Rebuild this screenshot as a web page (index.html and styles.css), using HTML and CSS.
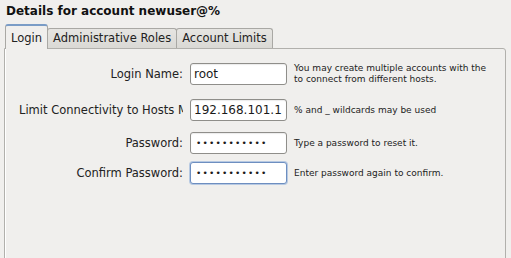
FILE: index.html
```html
<!DOCTYPE html>
<html lang="en">
<head>
<meta charset="UTF-8">
<title>Details for account</title>
<link rel="stylesheet" href="styles.css">
</head>
<body>
<div class="window">
  <h1 class="title">Details for account newuser@%</h1>
  <div class="tabs">
    <div class="tab tab-active">Login</div>
    <div class="tab">Administrative Roles</div>
    <div class="tab">Account Limits</div>
  </div>
  <div class="panel">
    <div class="form">
      <div class="row row-login">
        <label class="label">Login Name:</label>
        <div class="input">root</div>
        <p class="hint">You may create multiple accounts with the<br>to connect from different hosts.</p>
      </div>
      <div class="row row-host">
        <label class="label">Limit Connectivity to Hosts Matching:</label>
        <div class="input">192.168.101.1</div>
        <p class="hint">% and _ wildcards may be used</p>
      </div>
      <div class="row row-pass">
        <label class="label">Password:</label>
        <div class="input input-dots">&bull;&bull;&bull;&bull;&bull;&bull;&bull;&bull;&bull;&bull;&bull;</div>
        <p class="hint">Type a password to reset it.</p>
      </div>
      <div class="row row-confirm">
        <label class="label">Confirm Password:</label>
        <div class="input input-dots input-focus">&bull;&bull;&bull;&bull;&bull;&bull;&bull;&bull;&bull;&bull;&bull;</div>
        <p class="hint">Enter password again to confirm.</p>
      </div>
    </div>
  </div>
</div>
</body>
</html>
```
FILE: styles.css
```css
body {
  margin: 0;
  background-color: #f0efed;
  font-family: "DejaVu Sans", sans-serif;
  color: #1a1a1a;
  overflow: hidden;
}

.window {
  padding: 2px 5px 0 4px;
}

.title {
  margin: 0 0 0 2px;
  font-size: 12px;
  font-weight: bold;
  line-height: 18px;
  height: 22px;
  color: #111;
}

.tabs {
  display: flex;
  align-items: flex-end;
  margin-left: 1px;
  height: 24px;
}

.tab {
  font-size: 11.5px;
  line-height: 19px;
  padding: 0 5px;
  height: 19px;
  border: 1px solid #a9a8a4;
  border-bottom: none;
  border-radius: 3px 3px 0 0;
  background: linear-gradient(#e6e5e2, #dad9d5);
  color: #222;
}

.tab + .tab {
  margin-left: -1px;
}

.tab-active {
  height: 23px;
  line-height: 24px;
  background: #f0efed;
  border-top: 2px solid #7a9cc6;
  margin-bottom: -1px;
  position: relative;
  z-index: 1;
}

.panel {
  border: 1px solid #b1b0ac;
  border-radius: 0 3px 0 0;
  height: 220px;
  box-shadow: inset 1px 0 0 #fff;
}

.form {
  display: grid;
  grid-template-columns: 164px 97px auto;
  column-gap: 7px;
  padding: 14px 0 0 14px;
}

.row {
  display: contents;
}

.label {
  font-size: 11.5px;
  text-align: right;
  white-space: nowrap;
  overflow: hidden;
  align-self: center;
  color: #222;
}

.input {
  box-sizing: border-box;
  height: 22px;
  border: 1px solid #8f8e8a;
  border-radius: 3px;
  background: #fff;
  font-size: 12px;
  line-height: 20px;
  padding: 0 3px;
  white-space: nowrap;
  overflow: hidden;
  box-shadow: inset 0 1px 1px rgba(0, 0, 0, 0.08);
}

.input-dots {
  font-size: 9px;
  letter-spacing: 1.2px;
  padding-left: 5px;
}

.input-focus {
  border-color: #6d8ec0;
  box-shadow: 0 0 0 1px #b7c9e2;
}

.hint {
  margin: 0;
  font-size: 9px;
  line-height: 11px;
  align-self: center;
  color: #222;
}

.row-host .input,
.row-host .label,
.row-host .hint {
  margin-top: 14px;
}

.row-pass .input,
.row-pass .label,
.row-pass .hint {
  margin-top: 11px;
}

.row-confirm .input,
.row-confirm .label,
.row-confirm .hint {
  margin-top: 8px;
}
```
